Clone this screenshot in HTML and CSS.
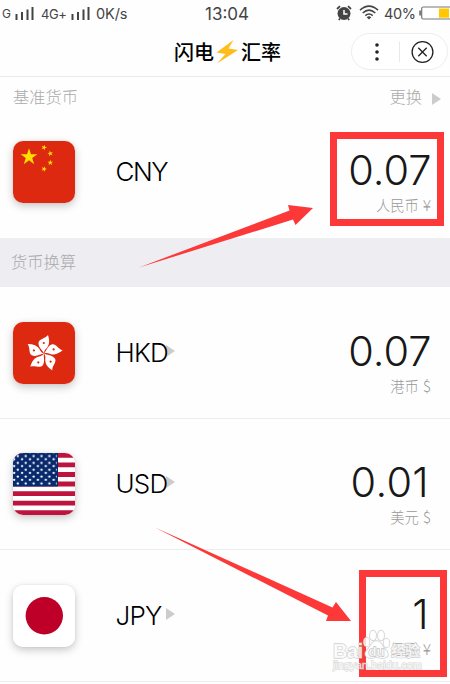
FILE: index.html
```html
<!DOCTYPE html>
<html lang="zh-CN">
<head>
<meta charset="utf-8">
<title>闪电汇率</title>
<link rel="stylesheet" href="styles.css">
</head>
<body>
<svg class="defs" width="0" height="0">
  <defs>
    <path id="star" d="M0-10 2.25-3.1 9.5-3.1 3.65 1.2 5.9 8.1 0 3.8-5.9 8.1-3.65 1.2-9.5-3.1-2.25-3.1Z"/>
    <pattern id="stars" width="7.9" height="6.85" y=".5" patternUnits="userSpaceOnUse">
      <circle cx="4.8" cy="2.500" r="1.150" fill="#fff"/><circle cx="1.150" cy="5.700" r="1.150" fill="#fff"/>
    </pattern>
    <g id="petal">
      <path d="M0 0C-1-3-6-6-5.500-11C-4.500-15 1-14.500 4-18.500C5-15 6-11 4-7.500C3-5 0-4 0 0Z" fill="#fff"/>
      <circle cx="-.2" cy="-10.500" r="1.100" fill="#dc2910"/>
    </g>
  </defs>
</svg>
<main class="screen">
  <header class="status">
    <div class="network">
      <span class="g">G</span>
      <svg width="19" height="14" viewBox="0 0 19 14"><path d="M1.500 7v6M7 5v8M12.500 2.500V13M17.500 0v13" stroke="#444" stroke-width="2"/></svg>
      <span class="lte">4G+</span>
      <svg width="19" height="14" viewBox="0 0 19 14"><path d="M1.500 7v6M7 5v8M12.500 2.500V13M17.500 0v13" stroke="#444" stroke-width="2"/></svg>
      <span class="speed">0K/s</span>
    </div>
    <time>13:04</time>
    <div class="device">
      <svg class="alarm" width="16" height="16" viewBox="0 0 16 16"><circle cx="8" cy="8.500" r="6.500" fill="#444"/><path d="M1 4 4 1.200M15 4 12 1.200M4 13.500 2.800 15M12 13.500 13.200 15" stroke="#444" stroke-width="1.800"/><path d="M8 5V9H11.500" fill="none" stroke="#fff" stroke-width="1.500"/></svg>
      <svg class="wifi" width="20" height="15" viewBox="0 0 20 15"><g fill="none" stroke="#444" stroke-width="1.600"><path d="M1 5.200Q10-2.800 19 5.200M3.700 8Q10 2.400 16.300 8M6.300 10.600Q10 7.400 13.700 10.600"/></g><path d="M7.700 12.200Q10 10.500 12.300 12.200L10 14.500Z" fill="#444"/></svg>
      <span class="percent">40%</span>
      <svg class="battery" width="32" height="14" viewBox="0 0 32 14"><path d="M2.200 4.500V9.500" stroke="#777" stroke-width="2"/><rect x="3.700" y="1" width="32" height="12" rx="1.500" fill="#fff" stroke="#777" stroke-width="1.200"/><path d="M21 2.500H31V11.700H21Z" fill="#ffc800"/></svg>
    </div>
  </header>
  <div class="titlebar">
    <h1><span>闪电</span><svg width="23" height="24" viewBox="0 0 23 24"><path d="M17.500 0 .5 12.500 9.500 14 1 23.500 22 10 12.500 8.500Z" fill="#ffbd1b"/></svg><span>汇率</span></h1>
    <div class="capsule">
      <svg width="97" height="37" viewBox="0 0 97 37"><rect x=".5" y=".5" width="96" height="36" rx="18" fill="#fff" stroke="#ededed"/><g fill="#222"><circle cx="26" cy="12" r="1.800"/><circle cx="26" cy="19" r="1.800"/><circle cx="26" cy="26" r="1.800"/></g><path d="M48.500 8.500V29" stroke="#e8e8e8"/><circle cx="71.500" cy="19" r="10.400" fill="none" stroke="#222" stroke-width="1.300"/><path d="M67.300 14.800 75.700 23.200M75.700 14.800 67.300 23.200" stroke="#222" stroke-width="1.300"/></svg>
    </div>
  </div>
  <section class="base">
    <div class="section-label"><span>基准货币</span><span class="change">更换<i class="tri"></i></span></div>
    <div class="row first">
      <svg class="flag" viewBox="0 0 62 62"><rect width="62" height="62" fill="#dc2910"/><g fill="#ffdf00"><use href="#star" transform="translate(16 16) scale(.88)"/><use href="#star" transform="translate(31 6.500) rotate(20) scale(.3)"/><use href="#star" transform="translate(37.300 12.500) rotate(-12) scale(.3)"/><use href="#star" transform="translate(37.300 21.700) scale(.3)"/><use href="#star" transform="translate(31 28) rotate(20) scale(.3)"/></g></svg>
      <span class="code">CNY</span>
      <div class="value"><b>0.07</b><small>人民币 <i>¥</i></small></div>
    </div>
  </section>
  <h2>货币换算</h2>
  <section class="list">
    <div class="row">
      <svg class="flag" viewBox="0 0 62 62"><rect width="62" height="62" fill="#dc2910"/><g transform="translate(31 31.500)"><use href="#petal"/><use href="#petal" transform="rotate(68)"/><use href="#petal" transform="rotate(142)"/><use href="#petal" transform="rotate(214)"/><use href="#petal" transform="rotate(288)"/></g></svg>
      <span class="code">HKD<i class="tri"></i></span>
      <div class="value"><b>0.07</b><small>港币 <i>$</i></small></div>
    </div>
    <div class="row">
      <svg class="flag" viewBox="0 0 62 62"><rect width="62" height="62" fill="#fff"/><path d="M0 2.400H62M0 11.900H62M0 21.500H62M0 31H62M0 40.600H62M0 50.100H62M0 59.700H62" stroke="#be133e" stroke-width="4.800"/><path d="M0 0H45V33.500H0Z" fill="#08296c"/><path d="M0 .5H44V32H0Z" fill="url(#stars)"/></svg>
      <span class="code">USD<i class="tri"></i></span>
      <div class="value"><b class="cents">0.01</b><small>美元 <i>$</i></small></div>
    </div>
    <div class="row">
      <svg class="flag" viewBox="0 0 62 62"><rect width="62" height="62" fill="#fff"/><circle cx="31.300" cy="30.700" r="18.700" fill="#be0029"/></svg>
      <span class="code jpy">JPY<i class="tri"></i></span>
      <div class="value"><b class="cents">1</b><small>日元 <i>¥</i></small></div>
    </div>
  </section>
  <svg class="marks" width="450" height="684" viewBox="0 0 450 684">
    <g fill="none" stroke="#fc3838" stroke-width="7"><path d="M333.500 135.500H440.500V222.500H333.500Z"/><path d="M362.500 573.500H443.500V673.500H362.500Z"/></g>
    <g fill="#fc3838"><path d="M139 267.500 289.500 210.500 288 205 313 208 295.500 225 293 219.500Z"/><path d="M155 527.500 332.500 607.500 336 602 351 621 326 621 328 615.500Z"/></g>
    <g fill="#fff" fill-opacity=".8" stroke="#bbb" stroke-opacity=".7" stroke-width="1.300" paint-order="stroke" font-family="Liberation Sans, Noto Sans CJK SC, sans-serif" font-weight="700">
      <text x="333" y="658" font-size="20" textLength="30">Bai</text>
      <ellipse cx="366.500" cy="642" rx="3" ry="4.500"/><ellipse cx="373" cy="635.500" rx="3.200" ry="5"/><ellipse cx="381" cy="635.500" rx="3.200" ry="5"/><ellipse cx="386.500" cy="643" rx="3" ry="4.500"/>
      <path d="M376.500 641C382 641 382 647 386 650C392 657 384 660 376.500 657C369 660 361 656 367 650C371 647 371 641 376.500 641Z"/>
      <text x="368.500" y="655.500" font-size="13" textLength="16" stroke-opacity=".9">du</text>
      <text x="391" y="656" font-size="15" textLength="29">经验</text>
      <text x="333" y="669" font-size="11" textLength="89" font-weight="400" stroke-opacity=".5">jingyan.baidu.com</text>
    </g>
  </svg>
</main>
</body>
</html>
```
FILE: styles.css
```css
* { box-sizing: border-box; }
body { margin: 0; background: #fff; font-family: Inter, "Noto Sans CJK SC", sans-serif; }
.defs { position: absolute; }
.screen { position: relative; width: 450px; height: 684px; overflow: hidden; background: #fefefe; }
svg { display: block; flex: none; }
i { font-style: normal; }

.status { display: grid; grid-template-columns: 205px 1fr auto; height: 28px; color: #444; font-size: 14px; line-height: 28px; }
.network, .device { display: flex; align-items: center; }
.network svg { margin-top: -1px; }
.g { width: 13px; padding-left: 2px; font-size: 12px; }
.network svg:nth-of-type(1) { margin-left: 2px; }
.lte { width: 30px; padding-left: 7px; font-size: 13px; letter-spacing: -.4px; }
.network svg:nth-of-type(2) { margin-left: 7px; }
.speed { padding-left: 6px; font-size: 14.500px; letter-spacing: -.1px; }
time { font-size: 17px; }
.alarm { margin-top: -3px; }
.wifi { margin: -3px 5px 0 7px; }
.percent { width: 34px; font-size: 14.500px; letter-spacing: -.4px; }
.battery { margin-top: -2px; }

.titlebar { display: flex; justify-content: flex-end; height: 49px; border-bottom: 1px solid #eaeaea; padding-top: 5px; }
h1 { display: flex; align-items: center; gap: 2px; height: 38px; margin: 0 70px 0 0; font: 500 20px/38px "Noto Sans CJK SC", sans-serif; color: #000; }
.capsule { width: 99px; }

.base { height: 161px; }
.section-label { display: flex; justify-content: space-between; height: 38px; padding: 0 9px 0 13px; color: #aaa; font: 300 16.300px/38px "Noto Sans CJK SC", sans-serif; }
.change { display: flex; align-items: center; gap: 10px; }
.tri { width: 0; height: 0; border-left: 9px solid #ccc; border-top: 6px solid transparent; border-bottom: 6px solid transparent; }
.change .tri { margin-top: 5px; }

h2 { height: 49px; margin: 0; padding-left: 11px; background: #eeedf2; color: #aaa; font: 300 16.300px/47px "Noto Sans CJK SC", sans-serif; }
.row { display: flex; height: 131.500px; padding: 35px 19px 0 13px; border-bottom: 1px solid #ededed; }
.list .row:nth-child(2) { padding-top: 34.500px; }
.row.first { height: 123px; padding-top: 26px; border: 0; }
.flag { width: 62px; height: 62px; border-radius: 10px; box-shadow: 0 3px 9px rgba(0,0,0,.22), 0 0 2px rgba(0,0,0,.1); }
.code { position: relative; z-index: 1; width: 60px; height: 62px; margin-left: 40.500px; color: #000; font-size: 26px; font-weight: 300; line-height: 62px; letter-spacing: -.8px; }
.row.first .code { letter-spacing: -1.400px; }
.code .tri { position: absolute; z-index: -1; left: 50.500px; top: 23px; }
.value { display: flex; flex: 1; flex-direction: column; align-items: flex-end; }
.value b { height: 57px; margin-right: -.5px; color: #181818; font-size: 41.500px; font-weight: 300; line-height: 59px; }
.value .cents { margin-right: 2px; letter-spacing: .3px; }
.value small { height: 20px; margin: -4px -1px 0 0; color: #999; font: 300 14.300px/20px "Noto Sans CJK SC", sans-serif; }
.value small i { display: inline-block; width: 10px; font-size: 15.500px; line-height: 20px; text-align: center; }
.marks { position: absolute; z-index: 5; inset: 0; }
```
